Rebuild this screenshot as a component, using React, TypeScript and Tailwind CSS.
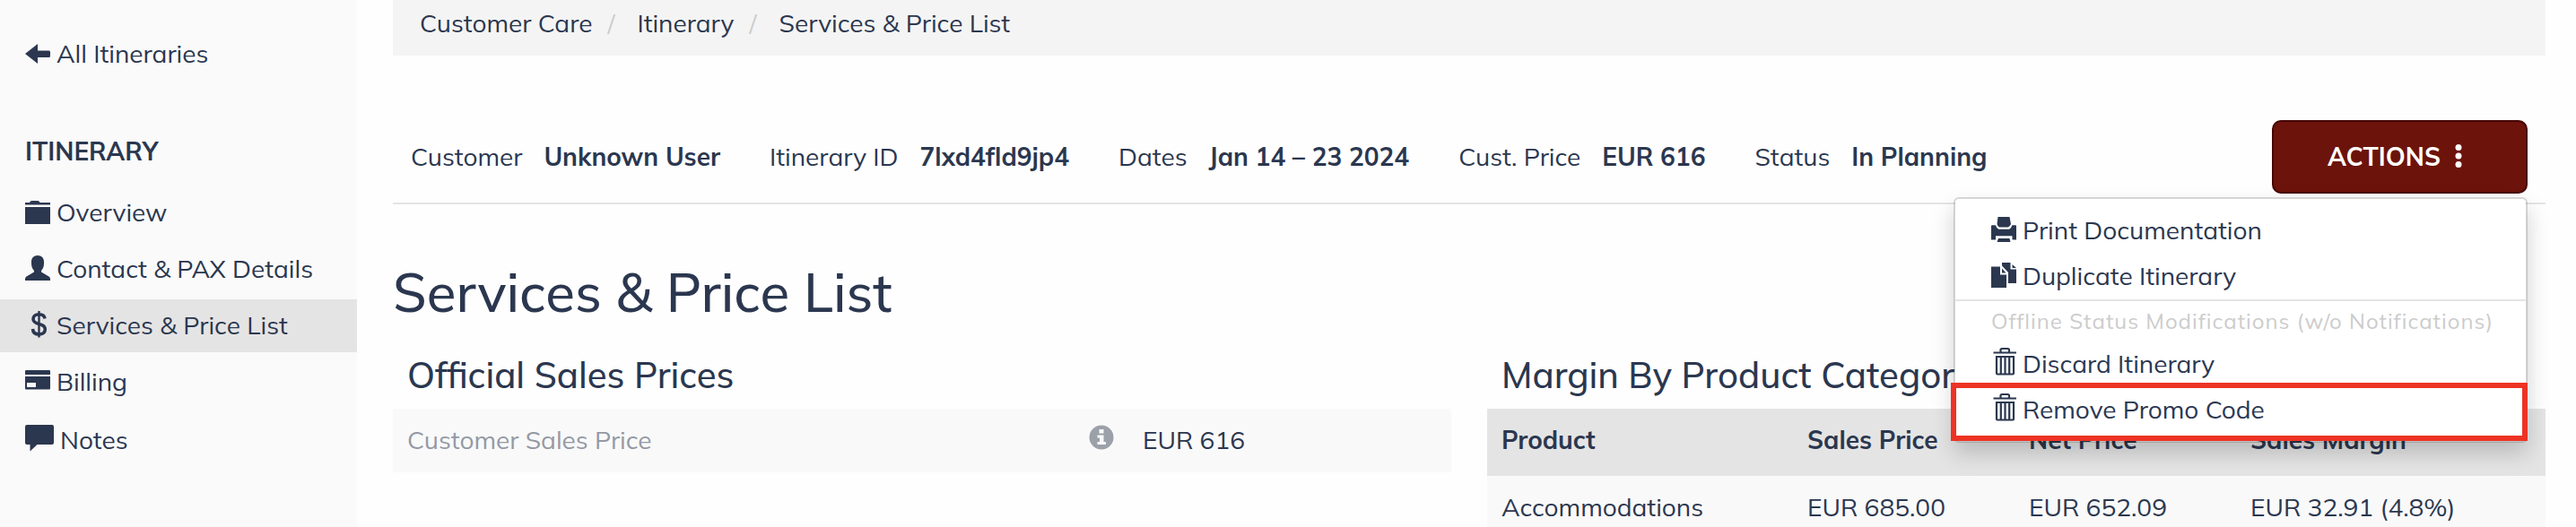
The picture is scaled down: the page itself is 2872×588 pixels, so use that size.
import React from 'react';

type IconProps = { children: React.ReactNode };

const Icon: React.FC<IconProps> = ({ children }) => (
  <svg viewBox="0 -6 28 38" className="h-[38px] w-7 shrink-0 fill-current" aria-hidden="true">
    {children}
  </svg>
);

const ArrowIcon = () => (
  <Icon>
    <path d="M0 13 14 2V9.500H26.500Q28 9.500 28 11V15.500Q28 17 26.500 17H14V24Z" />
  </Icon>
);

const FolderIcon = () => (
  <Icon>
    <path d="M0 2H5Q5.500 0 7.500 0H14Q16 0 16.500 2H28V4.500H0ZM0 7H28V26H0Z" />
  </Icon>
);

const UserIcon = () => (
  <Icon>
    <path d="M14-2C18.500-2 21 1 21 5V7C21 10 20 13 18 15V16.500L26.500 21.500Q28 22.500 28 24V26H0V24Q0 22.500 1.500 21.500L10 16.500V15C8 13 7 10 7 7V5C7 1 9.500-2 14-2Z" />
  </Icon>
);

const DollarIcon = () => (
  <Icon>
    <path
      d="M22 5.500C21.500 2 19 .800 15.500 .800C11.500 .800 9 2.800 9 6C9 9.500 11.500 10.500 15.500 11.500C20 12.500 22.300 14 22.300 17.500C22.300 21 19.500 23 15.500 23C11.500 23 8.800 21 8.500 17"
      fill="none"
      stroke="currentColor"
      strokeWidth="3.600"
    />
    <path d="M14.300-3H16.700V26.500H14.300Z" />
  </Icon>
);

const CardIcon = () => (
  <Icon>
    <path fillRule="evenodd" d="M1 0H27Q28 0 28 1V5H0V1Q0 0 1 0ZM0 7H28V20.500Q28 21.500 27 21.500H1Q0 21.500 0 20.500ZM2 14V19H12V14Z" />
  </Icon>
);

const NoteIcon = () => (
  <svg viewBox="0 -10 32 46" className="h-[46px] w-8 shrink-0 fill-current" aria-hidden="true">
    <path d="M2-4H30Q32-4 32-2V16Q32 18 30 18H13.500L5.500 25.500V18H2Q0 18 0 16V-2Q0-4 2-4Z" />
  </svg>
);

const PrintIcon = () => (
  <Icon>
    <path d="M7.500-2H20.500L22 6Q21 8 19 9.500H9Q7 8 6.500 6ZM0 8Q0 7.300 1 7.300H5Q5.300 10 8.500 11.700H20Q23 10 23.300 7.300H27Q28 7.300 28 8V23.500H23.500V19.300H5V23.500H0ZM8 22H20.500L21.500 26H6.500Z" />
  </Icon>
);

const DuplicateIcon = () => (
  <Icon>
    <path d="M0 2.500H10V11.500H17V26H0ZM12 4.500 16.500 9.500H12ZM12-2H21.500V5.500H28V21H19V9L12 1.500ZM23.500 0 28 4H23.500Z" />
  </Icon>
);

const TrashIcon = () => (
  <Icon>
    <g fill="none" stroke="currentColor" strokeWidth="2.200">
      <path d="M2.500 .500H28M10.500 .500V-2.500Q10.500-4 12-4H18.500Q20 -4 20 -2.500V.500" />
      <path d="M6 5H25V23.500Q25 24.500 24 24.500H7Q6 24.500 6 23.500ZM10.800 5V24.500M15.500 5V24.500M20.200 5V24.500" />
    </g>
  </Icon>
);

const DotsIcon = () => (
  <Icon>
    <circle cx="13" cy="2.500" r="3.500" />
    <circle cx="13" cy="12" r="3.500" />
    <circle cx="13" cy="21.500" r="3.500" />
  </Icon>
);

const InfoIcon = () => (
  <svg viewBox="0 0 28 36" className="ml-auto h-9 w-7 text-[#9ba0a9]" role="img" aria-label="Info">
    <circle cx="14" cy="14" r="13.500" fill="currentColor" />
    <path d="M11.500 5H16.500V9.500H11.500ZM9.500 11.500H16.500V19H19V22H9.500V19H12V14.500H9.500Z" fill="#f9f9f9" />
  </svg>
);

const navItems = [
  { label: 'Overview', icon: FolderIcon },
  { label: 'Contact & PAX Details', icon: UserIcon },
  { label: 'Services & Price List', icon: DollarIcon, active: true },
  { label: 'Billing', icon: CardIcon },
  { label: 'Notes', icon: NoteIcon }
];

const summary = [
  { label: 'Customer', value: 'Unknown User' },
  { label: 'Itinerary ID', value: '7lxd4fld9jp4' },
  { label: 'Dates', value: 'Jan 14 – 23 2024' },
  { label: 'Cust. Price', value: 'EUR 616' },
  { label: 'Status', value: 'In Planning' }
];

const margins = [
  { product: 'Accommodations', sales: 'EUR 685.00', net: 'EUR 652.09', margin: 'EUR 32.91 (4.8%)' }
];

const menuItem = 'relative flex h-[51px] w-full items-center gap-[7px] px-10 text-left';

export default function App() {
  return (
    <div className="flex h-screen overflow-hidden bg-[#fefefe] font-['Mulish','Lato',sans-serif] text-[28px] leading-[42px] text-[#2b374f]">
      {/* Sidebar */}
      <aside className="w-[398px] shrink-0 bg-[#fafafa] pt-[39px]">
        <a href="#" className="flex h-[42px] items-center gap-[7px] px-7">
          <ArrowIcon />
          All Itineraries
        </a>
        <h2 className="mt-[67px] px-7 font-bold">ITINERARY</h2>
        <nav className="mt-[18px] flex flex-col gap-1">
          {navItems.map(item => (
            <a
              key={item.label}
              href="#"
              className={`flex min-h-[59px] items-center gap-[7px] px-7 pt-2 pb-[9px] ${item.active ? 'bg-[#e4e4e4]' : ''}`}
            >
              <item.icon />
              {item.label}
            </a>
          ))}
        </nav>
      </aside>

      <main className="min-w-0 flex-1 pr-[34px] pl-10">
        {/* Breadcrumb */}
        <nav className="flex bg-[#f4f4f4] px-[30px] pt-[5px] pb-[15px]">
          <a href="#">Customer Care</a>
          <span className="mr-[25px] ml-[17px] text-[#cccccc]">/</span>
          <a href="#">Itinerary</a>
          <span className="mr-[25px] ml-[17px] text-[#cccccc]">/</span>
          <span>Services &amp; Price List</span>
        </nav>

        {/* Itinerary summary */}
        <div className="mt-[72px] flex items-center justify-between border-b-2 border-[#e4e4e4] pr-5 pb-[10px] pl-5">
          <dl className="flex gap-[55px]">
            {summary.map(item => (
              <div key={item.label} className="flex gap-6">
                <dt>{item.label}</dt>
                <dd className="font-bold">{item.value}</dd>
              </div>
            ))}
          </dl>
          <div className="relative">
            <button className="flex h-[82px] items-center gap-[7px] rounded-[10px] border-2 border-[#450603] bg-[#6c130b] px-[60px] font-bold text-white">
              ACTIONS
              <DotsIcon />
            </button>
            <div className="absolute top-[86px] right-0 z-10 w-[640px] rounded-md border-2 border-black/15 bg-white bg-clip-padding pt-[9px] pb-[10px] shadow-[0_12px_24px_rgba(0,0,0,0.18)]">
              <button className={menuItem}>
                <PrintIcon />
                Print Documentation
              </button>
              <button className={menuItem}>
                <DuplicateIcon />
                Duplicate Itinerary
              </button>
              <hr className="mt-px border-t-2 border-[#e4e4e4]" />
              <p className="mt-1 mb-1 px-10 text-2xl leading-9 tracking-[1px] whitespace-nowrap text-[#cccccc]">
                Offline Status Modifications (w/o Notifications)
              </p>
              <button className={menuItem}>
                <TrashIcon />
                Discard Itinerary
              </button>
              <button className={menuItem}>
                <TrashIcon />
                Remove Promo Code
                <span className="absolute -top-1 -right-0.5 -bottom-[10px] -left-[5px] border-[6px] border-[#ed3324]" />
              </button>
            </div>
          </div>
        </div>

        <h1 className="mt-[62px] mb-8 text-[60px] leading-[72px] font-medium">Services &amp; Price List</h1>

        <div className="grid grid-cols-2 gap-10">
          {/* Official prices */}
          <section>
            <h2 className="mb-[14px] px-4 text-[40px] leading-[48px] font-medium">Official Sales Prices</h2>
            <table className="w-full">
              <tbody>
                <tr className="bg-[#f9f9f9]">
                  <th scope="row" className="px-4 pt-[14px] pb-[15px] text-left font-normal text-[#9499a5]">
                    Customer Sales Price
                  </th>
                  <td className="px-4">
                    <InfoIcon />
                  </td>
                  <td className="w-[360px] px-4 pt-[14px] pb-[15px]">EUR 616</td>
                </tr>
              </tbody>
            </table>
          </section>

          {/* Margins */}
          <section>
            <h2 className="mb-[14px] px-4 text-[40px] leading-[48px] font-medium">Margin By Product Category</h2>
            <table className="w-full table-fixed text-left">
              <thead>
                <tr className="bg-[#e4e4e4]">
                  <th className="w-[341px] px-4 pt-[14px] pb-[19px]">Product</th>
                  <th className="w-[247px] px-4 pt-[14px] pb-[19px]">Sales Price</th>
                  <th className="w-[247px] px-4 pt-[14px] pb-[19px]">Net Price</th>
                  <th className="px-4 pt-[14px] pb-[19px]">Sales Margin</th>
                </tr>
              </thead>
              <tbody>
                {margins.map(row => (
                  <tr key={row.product} className="bg-[#f9f9f9]">
                    <td className="px-4 pt-[14px] pb-[15px]">{row.product}</td>
                    <td className="px-4 pt-[14px] pb-[15px]">{row.sales}</td>
                    <td className="px-4 pt-[14px] pb-[15px]">{row.net}</td>
                    <td className="px-4 pt-[14px] pb-[15px]">{row.margin}</td>
                  </tr>
                ))}
              </tbody>
            </table>
          </section>
        </div>
      </main>
    </div>
  );
}
